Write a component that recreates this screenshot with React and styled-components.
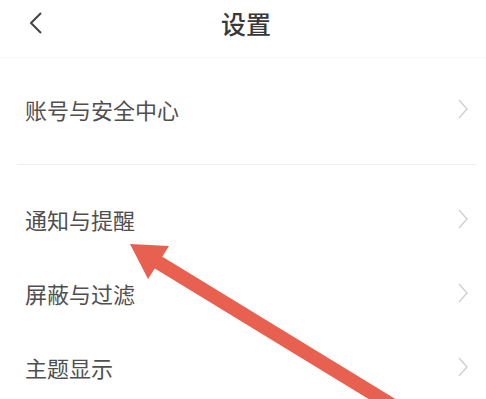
import React from 'react';
import styled, { createGlobalStyle } from 'styled-components';

const GlobalStyle = createGlobalStyle`
  html, body {
    margin: 0;
    padding: 0;
    background: #fff;
  }
  body {
    font-family: "Noto Sans CJK SC", "Noto Sans", sans-serif;
  }
`;

const Page = styled.div`
  position: relative;
  width: 486px;
  height: 399px;
  overflow: hidden;
  background: #fff;
`;

const Header = styled.div`
  height: 57px;
  display: flex;
  align-items: center;
  justify-content: center;
  position: relative;
  border-bottom: 1px solid #f9f9f9;
`;

const BackButton = styled.div`
  position: absolute;
  left: 28px;
  top: 11px;
  width: 16px;
  height: 24px;
  display: flex;
`;

const Title = styled.h1`
  margin: -10px 0 0 6px;
  font-size: 25px;
  font-weight: 500;
  color: #383838;
  line-height: 1;
`;

const Group = styled.div`
  padding-top: ${p => p.top}px;
`;

const Row = styled.div`
  height: 74px;
  display: flex;
  align-items: center;
  justify-content: space-between;
  padding: 0 16px 0 25px;
`;

const Label = styled.span`
  font-size: 22px;
  color: #4f4f4f;
`;

const Divider = styled.div`
  height: 1px;
  background: #efefef;
  margin: 18px 9px 17px 17px;
`;

const Overlay = styled.svg`
  position: absolute;
  left: 0;
  top: 0;
  pointer-events: none;
`;

const Chevron = () => (
  <svg width="14" height="22" viewBox="0 0 14 22">
    <polyline points="3,2 11,11 3,20" fill="none" stroke="#d0d0d0" strokeWidth="1.4" />
  </svg>
);

const items = [['账号与安全中心'], ['通知与提醒', '屏蔽与过滤', '主题显示']];

export default function App() {
  return (
    <Page>
      <GlobalStyle />
      <Header>
        <BackButton>
          <svg width="16" height="24" viewBox="0 0 16 24">
            <polyline points="13,2 3,12 13,22" fill="none" stroke="#444" strokeWidth="2" />
          </svg>
        </BackButton>
        <Title>设置</Title>
      </Header>
      <Group top={14}>
        {items[0].map(t => (
          <Row key={t}>
            <Label>{t}</Label>
            <Chevron />
          </Row>
        ))}
      </Group>
      <Divider />
      <Group top={0}>
        {items[1].map(t => (
          <Row key={t}>
            <Label>{t}</Label>
            <Chevron />
          </Row>
        ))}
      </Group>
      <Overlay width="486" height="399" viewBox="0 0 486 399">
        <line x1="156" y1="261" x2="400" y2="410" stroke="#e8604f" strokeWidth="14" />
        <polygon points="130,244 169,246 148,279" fill="#e8604f" />
      </Overlay>
    </Page>
  );
}
